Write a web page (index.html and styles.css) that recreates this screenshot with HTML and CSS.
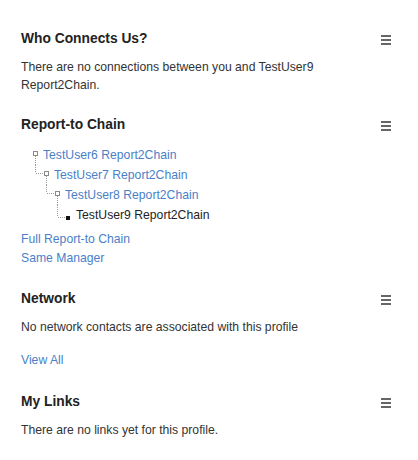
FILE: index.html
```html
<!DOCTYPE html>
<html>
<head>
<meta charset="utf-8">
<link rel="stylesheet" href="styles.css">
</head>
<body>
<div class="page">
  <section class="widget">
    <div class="widget-head">
      <h2>Who Connects Us?</h2>
      <span class="menu"><i></i><i></i><i></i></span>
    </div>
    <p class="text">There are no connections between you and TestUser9 Report2Chain.</p>
  </section>

  <section class="widget">
    <div class="widget-head">
      <h2>Report-to Chain</h2>
      <span class="menu"><i></i><i></i><i></i></span>
    </div>
    <ul class="tree">
      <li class="node l0">
        <svg class="conn" width="21" height="20" viewBox="0 0 21 20">
          <line class="dots" x1="13.5" y1="11" x2="13.5" y2="20"/>
          <rect class="box" x="11.5" y="6.5" width="4" height="4"/>
        </svg>
        <a href="#">TestUser6 Report2Chain</a>
      </li>
      <li class="node l1">
        <svg class="conn" width="21" height="20" viewBox="0 0 21 20">
          <line class="dots" x1="2.5" y1="0" x2="2.5" y2="8"/>
          <line class="dots" x1="3" y1="8.5" x2="11" y2="8.5"/>
          <line class="dots" x1="13.5" y1="11" x2="13.5" y2="20"/>
          <rect class="box" x="11.5" y="6.5" width="4" height="4"/>
        </svg>
        <a href="#">TestUser7 Report2Chain</a>
      </li>
      <li class="node l2">
        <svg class="conn" width="21" height="20" viewBox="0 0 21 20">
          <line class="dots" x1="2.5" y1="0" x2="2.5" y2="8"/>
          <line class="dots" x1="3" y1="8.5" x2="11" y2="8.5"/>
          <line class="dots" x1="13.5" y1="11" x2="13.5" y2="20"/>
          <rect class="box" x="11.5" y="6.5" width="4" height="4"/>
        </svg>
        <a href="#">TestUser8 Report2Chain</a>
      </li>
      <li class="node l3">
        <svg class="conn" width="21" height="20" viewBox="0 0 21 20">
          <line class="dots" x1="2.5" y1="0" x2="2.5" y2="12"/>
          <line class="dots" x1="3" y1="12.5" x2="11" y2="12.5"/>
          <rect class="leaf" x="11" y="11" width="4" height="4"/>
        </svg>
        <span class="self">TestUser9 Report2Chain</span>
      </li>
    </ul>
    <div class="links">
      <a href="#">Full Report-to Chain</a>
      <a href="#">Same Manager</a>
    </div>
  </section>

  <section class="widget">
    <div class="widget-head">
      <h2>Network</h2>
      <span class="menu"><i></i><i></i><i></i></span>
    </div>
    <p class="text">No network contacts are associated with this profile</p>
    <a class="view-all" href="#">View All</a>
  </section>

  <section class="widget">
    <div class="widget-head">
      <h2>My Links</h2>
      <span class="menu"><i></i><i></i><i></i></span>
    </div>
    <p class="text">There are no links yet for this profile.</p>
  </section>
</div>
</body>
</html>
```

FILE: styles.css
```css
html, body {
  margin: 0;
  padding: 0;
  background: #ffffff;
}

body {
  font-family: "Liberation Sans", Arial, sans-serif;
  font-size: 12.2px;
  color: #333333;
}

a {
  color: #4a7fc8;
  text-decoration: none;
}

.page {
  padding: 28px 27px 0 21px;
}

.widget + .widget {
  margin-top: 20px;
}

.widget-head {
  display: flex;
  justify-content: space-between;
  align-items: center;
  height: 21px;
}

.widget-head h2 {
  margin: 0;
  padding-top: 1px;
  font-size: 13.8px;
  line-height: 20px;
  font-weight: bold;
  color: #222222;
}

.menu {
  display: flex;
  flex-direction: column;
  gap: 2px;
  width: 10px;
  margin-top: 2px;
}

.menu i {
  display: block;
  height: 2px;
  background: #666666;
}

.text {
  margin: 9px 0 0;
  max-width: 340px;
  line-height: 18px;
}

.tree {
  list-style: none;
  margin: 10px 0 0;
  padding: 0;
}

.node {
  display: flex;
  align-items: flex-start;
  height: 20px;
  line-height: 20px;
}

.l0 { margin-left: 1px; }
.l1 { margin-left: 12px; }
.l2 { margin-left: 23px; }
.l3 { margin-left: 34px; }

.conn {
  display: block;
  flex: none;
  overflow: visible;
}

.conn .dots {
  stroke: #999999;
  stroke-width: 1;
  stroke-dasharray: 1 1;
}

.conn .box {
  fill: #ffffff;
  stroke: #8a8a8a;
  stroke-width: 1;
}

.conn .leaf {
  fill: #111111;
}

.self {
  color: #222222;
}

.links {
  margin-top: 5px;
  display: flex;
  flex-direction: column;
  align-items: flex-start;
  line-height: 19px;
}

.view-all {
  display: inline-block;
  margin-top: 14px;
  margin-bottom: 1px;
  line-height: 20px;
}
```
